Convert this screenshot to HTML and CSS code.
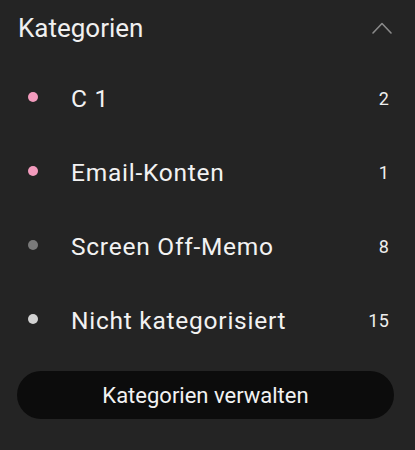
FILE: index.html
```html
<!DOCTYPE html>
<html lang="de">
<head>
<meta charset="utf-8">
<link rel="stylesheet" href="styles.css">
</head>
<body>
<div class="panel">
  <div class="header">
    <span class="title">Kategorien</span>
    <svg class="chevron" width="20" height="12" viewBox="0 0 20 12"><path d="M1 11 L10 1.5 L19 11" fill="none" stroke="#8a8a8a" stroke-width="1.6" stroke-linecap="round" stroke-linejoin="round"/></svg>
  </div>
  <ul class="list">
    <li class="row"><span class="dot pink"></span><span class="name">C 1</span><span class="count">2</span></li>
    <li class="row"><span class="dot pink"></span><span class="name">Email-Konten</span><span class="count">1</span></li>
    <li class="row"><span class="dot grey"></span><span class="name">Screen Off-Memo</span><span class="count">8</span></li>
    <li class="row"><span class="dot light"></span><span class="name">Nicht kategorisiert</span><span class="count">15</span></li>
  </ul>
  <div class="actions">
    <button class="manage">Kategorien verwalten</button>
  </div>
</div>
</body>
</html>
```
FILE: styles.css
```css
html, body {
  margin: 0;
  padding: 0;
  background: #242424;
}
body {
  width: 415px;
  height: 450px;
  overflow: hidden;
  font-family: Roboto, "Noto Sans", sans-serif;
  color: #f4f4f4;
}
.panel {
  display: flex;
  flex-direction: column;
}
.header {
  height: 56px;
  display: flex;
  align-items: center;
  justify-content: space-between;
  padding: 0 23px 0 18px;
}
.title {
  font-size: 26px;
  line-height: 1;
  color: #f0f0f0;
}
.chevron {
  display: block;
}
.list {
  list-style: none;
  margin: 5px 0 0 0;
  padding: 0;
}
.row {
  height: 74px;
  display: flex;
  align-items: center;
  padding: 0 26px 0 28px;
}
.dot {
  width: 10px;
  height: 10px;
  border-radius: 50%;
  flex: none;
  margin-top: -3px;
}
.pink { background: #f39bbd; }
.grey { background: #7a7a7a; }
.light { background: #d2d2d2; }
.name {
  margin-left: 33px;
  font-size: 24.5px;
  letter-spacing: 0.75px;
  flex: 1;
  color: #f2f2f2;
}
.count {
  font-size: 18px;
  letter-spacing: 0.2px;
  color: #eeeeee;
}
.actions {
  padding: 14px 21px 0 17px;
}
.manage {
  width: 100%;
  height: 48px;
  border: none;
  border-radius: 24px;
  background: #0c0c0c;
  color: #f2f2f2;
  font-family: Roboto, "Noto Sans", sans-serif;
  font-size: 22px;
  display: block;
  padding: 0;
}
```
